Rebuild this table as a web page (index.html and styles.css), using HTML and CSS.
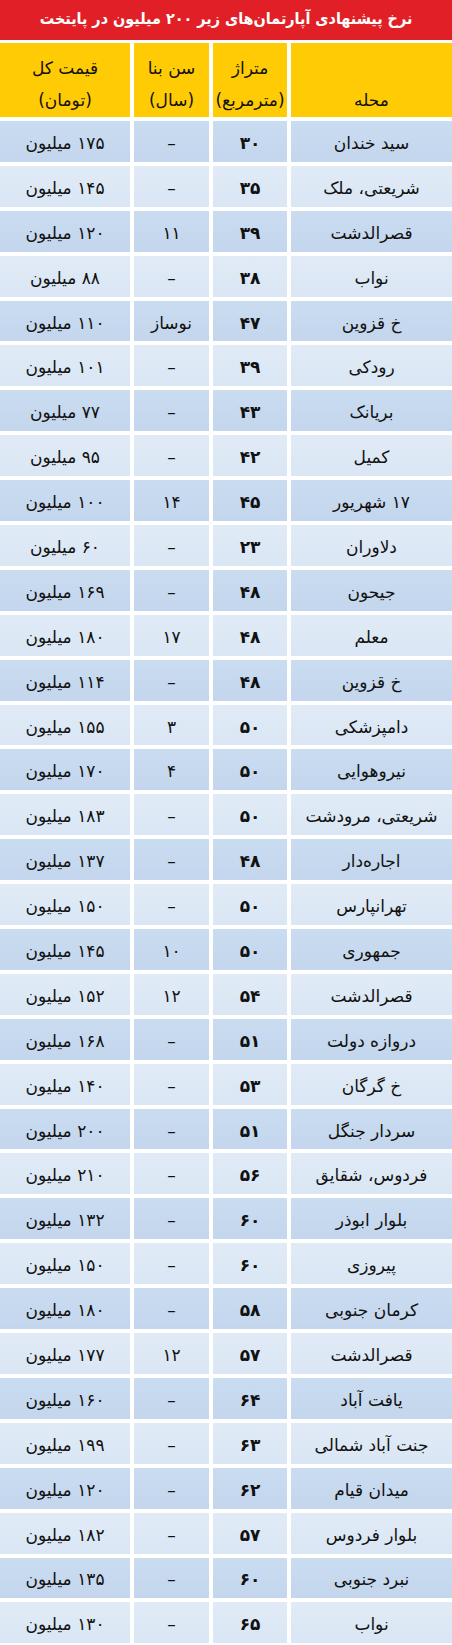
FILE: index.html
```html
<!DOCTYPE html>
<html lang="fa" dir="rtl">
<head>
<meta charset="utf-8">
<title>نرخ پیشنهادی آپارتمان‌های زیر ۲۰۰ میلیون در پایتخت</title>
<link rel="stylesheet" href="styles.css">
</head>
<body>
<div class="page">
  <h1 class="title">نرخ پیشنهادی آپارتمان‌های زیر ۲۰۰ میلیون در پایتخت</h1>
  <div class="table">
    <div class="row head">
      <div class="cell c-name"><span>محله</span></div>
      <div class="cell c-area"><span>متراژ</span><span>(مترمربع)</span></div>
      <div class="cell c-age"><span>سن بنا</span><span>(سال)</span></div>
      <div class="cell c-price"><span>قیمت کل</span><span>(تومان)</span></div>
    </div>
    <div class="row dark"><div class="cell c-name">سید خندان</div><div class="cell c-area">۳۰</div><div class="cell c-age">–</div><div class="cell c-price">۱۷۵ میلیون</div></div>
    <div class="row light"><div class="cell c-name">شریعتی، ملک</div><div class="cell c-area">۳۵</div><div class="cell c-age">–</div><div class="cell c-price">۱۴۵ میلیون</div></div>
    <div class="row dark"><div class="cell c-name">قصرالدشت</div><div class="cell c-area">۳۹</div><div class="cell c-age">۱۱</div><div class="cell c-price">۱۲۰ میلیون</div></div>
    <div class="row light"><div class="cell c-name">نواب</div><div class="cell c-area">۳۸</div><div class="cell c-age">–</div><div class="cell c-price">۸۸ میلیون</div></div>
    <div class="row dark"><div class="cell c-name">خ قزوین</div><div class="cell c-area">۴۷</div><div class="cell c-age">نوساز</div><div class="cell c-price">۱۱۰ میلیون</div></div>
    <div class="row light"><div class="cell c-name">رودکی</div><div class="cell c-area">۳۹</div><div class="cell c-age">–</div><div class="cell c-price">۱۰۱ میلیون</div></div>
    <div class="row dark"><div class="cell c-name">بریانک</div><div class="cell c-area">۴۳</div><div class="cell c-age">–</div><div class="cell c-price">۷۷ میلیون</div></div>
    <div class="row light"><div class="cell c-name">کمیل</div><div class="cell c-area">۴۲</div><div class="cell c-age">–</div><div class="cell c-price">۹۵ میلیون</div></div>
    <div class="row dark"><div class="cell c-name">۱۷ شهریور</div><div class="cell c-area">۴۵</div><div class="cell c-age">۱۴</div><div class="cell c-price">۱۰۰ میلیون</div></div>
    <div class="row light"><div class="cell c-name">دلاوران</div><div class="cell c-area">۲۳</div><div class="cell c-age">–</div><div class="cell c-price">۶۰ میلیون</div></div>
    <div class="row dark"><div class="cell c-name">جیحون</div><div class="cell c-area">۴۸</div><div class="cell c-age">–</div><div class="cell c-price">۱۶۹ میلیون</div></div>
    <div class="row light"><div class="cell c-name">معلم</div><div class="cell c-area">۴۸</div><div class="cell c-age">۱۷</div><div class="cell c-price">۱۸۰ میلیون</div></div>
    <div class="row dark"><div class="cell c-name">خ قزوین</div><div class="cell c-area">۴۸</div><div class="cell c-age">–</div><div class="cell c-price">۱۱۴ میلیون</div></div>
    <div class="row light"><div class="cell c-name">دامپزشکی</div><div class="cell c-area">۵۰</div><div class="cell c-age">۳</div><div class="cell c-price">۱۵۵ میلیون</div></div>
    <div class="row dark"><div class="cell c-name">نیروهوایی</div><div class="cell c-area">۵۰</div><div class="cell c-age">۴</div><div class="cell c-price">۱۷۰ میلیون</div></div>
    <div class="row light"><div class="cell c-name">شریعتی، مرودشت</div><div class="cell c-area">۵۰</div><div class="cell c-age">–</div><div class="cell c-price">۱۸۳ میلیون</div></div>
    <div class="row dark"><div class="cell c-name">اجاره‌دار</div><div class="cell c-area">۴۸</div><div class="cell c-age">–</div><div class="cell c-price">۱۳۷ میلیون</div></div>
    <div class="row light"><div class="cell c-name">تهرانپارس</div><div class="cell c-area">۵۰</div><div class="cell c-age">–</div><div class="cell c-price">۱۵۰ میلیون</div></div>
    <div class="row dark"><div class="cell c-name">جمهوری</div><div class="cell c-area">۵۰</div><div class="cell c-age">۱۰</div><div class="cell c-price">۱۴۵ میلیون</div></div>
    <div class="row light"><div class="cell c-name">قصرالدشت</div><div class="cell c-area">۵۴</div><div class="cell c-age">۱۲</div><div class="cell c-price">۱۵۲ میلیون</div></div>
    <div class="row dark"><div class="cell c-name">دروازه دولت</div><div class="cell c-area">۵۱</div><div class="cell c-age">–</div><div class="cell c-price">۱۶۸ میلیون</div></div>
    <div class="row light"><div class="cell c-name">خ گرگان</div><div class="cell c-area">۵۳</div><div class="cell c-age">–</div><div class="cell c-price">۱۴۰ میلیون</div></div>
    <div class="row dark"><div class="cell c-name">سردار جنگل</div><div class="cell c-area">۵۱</div><div class="cell c-age">–</div><div class="cell c-price">۲۰۰ میلیون</div></div>
    <div class="row light"><div class="cell c-name">فردوس، شقایق</div><div class="cell c-area">۵۶</div><div class="cell c-age">–</div><div class="cell c-price">۲۱۰ میلیون</div></div>
    <div class="row dark"><div class="cell c-name">بلوار ابوذر</div><div class="cell c-area">۶۰</div><div class="cell c-age">–</div><div class="cell c-price">۱۳۲ میلیون</div></div>
    <div class="row light"><div class="cell c-name">پیروزی</div><div class="cell c-area">۶۰</div><div class="cell c-age">–</div><div class="cell c-price">۱۵۰ میلیون</div></div>
    <div class="row dark"><div class="cell c-name">کرمان جنوبی</div><div class="cell c-area">۵۸</div><div class="cell c-age">–</div><div class="cell c-price">۱۸۰ میلیون</div></div>
    <div class="row light"><div class="cell c-name">قصرالدشت</div><div class="cell c-area">۵۷</div><div class="cell c-age">۱۲</div><div class="cell c-price">۱۷۷ میلیون</div></div>
    <div class="row dark"><div class="cell c-name">یافت آباد</div><div class="cell c-area">۶۴</div><div class="cell c-age">–</div><div class="cell c-price">۱۶۰ میلیون</div></div>
    <div class="row light"><div class="cell c-name">جنت آباد شمالی</div><div class="cell c-area">۶۳</div><div class="cell c-age">–</div><div class="cell c-price">۱۹۹ میلیون</div></div>
    <div class="row dark"><div class="cell c-name">میدان قیام</div><div class="cell c-area">۶۲</div><div class="cell c-age">–</div><div class="cell c-price">۱۲۰ میلیون</div></div>
    <div class="row light"><div class="cell c-name">بلوار فردوس</div><div class="cell c-area">۵۷</div><div class="cell c-age">–</div><div class="cell c-price">۱۸۲ میلیون</div></div>
    <div class="row dark"><div class="cell c-name">نبرد جنوبی</div><div class="cell c-area">۶۰</div><div class="cell c-age">–</div><div class="cell c-price">۱۳۵ میلیون</div></div>
    <div class="row light"><div class="cell c-name">نواب</div><div class="cell c-area">۶۵</div><div class="cell c-age">–</div><div class="cell c-price">۱۳۰ میلیون</div></div>
  </div>
</div>
</body>
</html>
```

FILE: styles.css
```css
html, body {
  margin: 0;
  padding: 0;
  background: #ffffff;
}

body {
  font-family: "DejaVu Sans", "Noto Sans", sans-serif;
  color: #111111;
}

.page {
  width: 452px;
  direction: rtl;
}

.title {
  margin: 0 0 3px 0;
  height: 40px;
  background: #e11f26;
  color: #ffffff;
  font-family: "DejaVu Sans Condensed", "DejaVu Sans", sans-serif;
  font-size: 16px;
  font-weight: bold;
  line-height: 38px;
  text-align: center;
  white-space: nowrap;
  overflow: hidden;
}

.table {
  display: flex;
  flex-direction: column;
  gap: 4px;
}

.row {
  display: grid;
  grid-template-columns: 161px 74px 75px 130px;
  column-gap: 4px;
  height: 40.9px;
}

.row.head {
  height: 74px;
}

.cell {
  display: flex;
  align-items: center;
  justify-content: center;
  padding-top: 3px;
  box-sizing: border-box;
  font-size: 17px;
  white-space: nowrap;
}

.head .cell {
  background: #ffcb05;
  flex-direction: column;
  justify-content: flex-end;
  padding-top: 0;
  padding-bottom: 1px;
  font-size: 17px;
  font-weight: normal;
  line-height: 32px;
}

.dark .cell {
  background: linear-gradient(#cadcf0, #c3d6ed);
}

.light .cell {
  background: linear-gradient(#e1ebf7, #dae6f4);
}

.c-area {
  font-weight: bold;
}

.c-price {
  font-weight: normal;
}
```
